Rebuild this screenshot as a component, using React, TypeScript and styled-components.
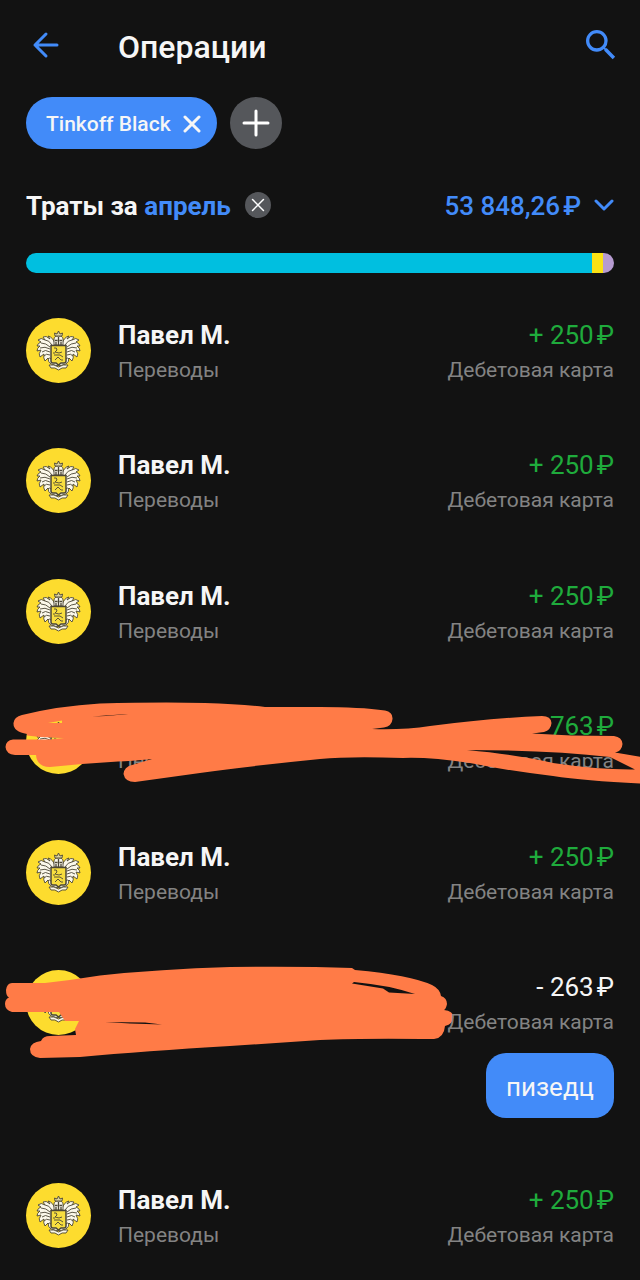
import React from "react";
import styled, { createGlobalStyle } from "styled-components";

const GlobalStyle = createGlobalStyle`
  *, *::before, *::after { box-sizing: border-box; }
  body { margin: 0; background: #121212; }
  button, h1, h2, ul, p { margin: 0; padding: 0; font: inherit; }
`;

const blue = "#428bf9";

const Screen = styled.div`
  min-height: 100vh;
  padding: 25px 26px 32px;
  overflow-x: hidden;
  background: #121212;
  color: #f6f6f6;
  font-family: Roboto, "Noto Sans", sans-serif;
`;

const Header = styled.header`
  display: flex;
  align-items: center;
  height: 40px;
`;

const IconButton = styled.button`
  display: flex;
  border: 0;
  background: none;
  color: ${blue};
  cursor: pointer;
`;

const SearchButton = styled(IconButton)`
  margin-right: -7px;
`;

const Title = styled.h1`
  flex: 1;
  padding: 4px 0 0 52px;
  font-size: 32px;
  line-height: 40px;
  font-weight: 500;
`;

const Filters = styled.div`
  display: flex;
  gap: 13px;
  margin-top: 32px;
`;

const Chip = styled.button`
  display: flex;
  align-items: center;
  gap: 12px;
  height: 52px;
  padding: 2px 16px 0 20px;
  border: 0;
  border-radius: 26px;
  background: ${blue};
  color: #f6f6f6;
  && { font-size: 21px; font-weight: 500; }
  cursor: pointer;
`;

const RoundButton = styled.button<{ $size: number }>`
  display: grid;
  place-items: center;
  width: ${(p) => p.$size}px;
  height: ${(p) => p.$size}px;
  border: 0;
  border-radius: 50%;
  background: #55575b;
  color: #fff;
  cursor: pointer;
`;

const Summary = styled.section`
  display: flex;
  align-items: center;
  justify-content: space-between;
  height: 32px;
  margin-top: 40px;
`;

const SummaryText = styled.span`
  padding-top: 2px;
`;

const Period = styled.h2`
  display: flex;
  align-items: center;
  gap: 14px;
  font-size: 26px;
  line-height: 32px;
  font-weight: 700;
`;

const MonthLink = styled.a`
  color: ${blue};
  text-decoration: none;
`;

const Total = styled.button`
  display: flex;
  align-items: center;
  gap: 13px;
  border: 0;
  background: none;
  color: ${blue};
  && { font-size: 26px; line-height: 32px; font-weight: 500; }
  cursor: pointer;
`;

const Bar = styled.div`
  display: flex;
  height: 20px;
  margin-top: 32px;
  border-radius: 10px;
  overflow: hidden;
`;

const Segment = styled.div<{ $share: number; $color: string }>`
  flex: ${(p) => p.$share} 0 0;
  background: ${(p) => p.$color};
`;

const List = styled.ul`
  margin-top: 45px;
  list-style: none;
`;

const Item = styled.li<{ $compact: boolean }>`
  padding-bottom: 65px;
  &:nth-child(even) { padding-bottom: ${(p) => (p.$compact ? 65 : 66)}px; }
  &:last-child { padding-bottom: 0; }
`;

const Row = styled.div`
  position: relative;
  display: flex;
  gap: 27px;
  height: 65px;
`;

const Avatar = styled.div`
  width: 65px;
  height: 65px;
  border-radius: 50%;
  background: #fddc2e;
`;

const Column = styled.div<{ $end?: boolean; $raised?: boolean }>`
  flex: ${(p) => (p.$end ? "none" : "1")};
  text-align: ${(p) => (p.$end ? "right" : "left")};
  ${(p) => p.$raised && "position: relative; z-index: 2;"}
`;

const Name = styled.p`
  font-size: 26px;
  line-height: 34px;
  font-weight: 700;
`;

const Amount = styled.p<{ $income: boolean }>`
  font-size: 26px;
  line-height: 34px;
  color: ${(p) => (p.$income ? "#1fab3c" : "#f6f6f6")};
`;

const Currency = styled.span`
  margin-left: 3px;
`;

const Caption = styled.p`
  font-size: 21px;
  line-height: 36px;
  color: #838383;
`;

const Bubble = styled.p`
  width: fit-content;
  height: 65px;
  margin: 18px 0 0 auto !important;
  padding: 2px 20px 0 !important;
  border-radius: 20px;
  background: ${blue};
  color: #f6f6f6;
  font-size: 26px;
  line-height: 65px;
`;

const Marker = styled.svg`
  position: absolute;
  z-index: 1;
  top: -14px;
  left: -26px;
  width: calc(100% + 52px);
  height: 110px;
  fill: #ff7b47;
  fill-rule: evenodd;
  pointer-events: none;
`;

const Cross = ({ size, width }: { size: number; width: number }) => (
  <svg width={size} height={size} viewBox="0 0 18 18" fill="none" stroke="currentColor" strokeWidth={width} strokeLinecap="round" aria-hidden="true">
    <path d="M2 2 16 16M16 2 2 16" />
  </svg>
);

const CrestHalf = () => (
  <g>
    <path
      d="M29 26Q27 19 22 18L24 21Q20 17 17 19L19 22Q15 19 12 22L15 24Q12 25 11 28L14 28Q11 30 11 33L15 32Q12 36 14 39L18 36Q17 40 19 43L22 40Q22 44 25 46L32 48Z"
      fill="#fbf8ea"
    />
    <path d="M26 27Q23 22 19 22M24 29Q20 25 15 25M24 31Q19 28 14 30M24 34Q19 31 16 34M24 37Q20 35 18 38M25 41Q23 39 22 41" />
  </g>
);

const Crest = () => (
  <svg width="65" height="65" viewBox="0 0 65 65" fill="none" stroke="#4b4635" strokeWidth=".9" aria-hidden="true">
    <CrestHalf />
    <g transform="matrix(-1 0 0 1 65 0)"><CrestHalf /></g>
    <path d="M23 47Q28 46 32.500 49Q37 46 42 47L40 50Q36 49 32.500 52Q29 49 25 50Z" fill="#fbf8ea" />
    <path d="M28 27V21Q28 18 32.500 18Q37 18 37 21V27Z" fill="#fbf8ea" />
    <path d="M29 18 28.500 15 31 16 32.500 13 34 16 36.500 15 36 18Z" fill="#ded4a0" />
    <path d="M32.500 19V27M29 22.500H31.500M33.500 22.500H36M30 24V27M35 24V27" strokeWidth="1.300" />
    <path d="M25 27.500H40V43Q40 45 38 45H35L32.500 47 30 45H27Q25 45 25 43Z" fill="#f7de3f" strokeWidth="1.500" />
    <path d="M28 30Q31 29 31 32L29 34 33 35 36 34M28 37H34L37 39M29 42 32 39 35 42 37 42M28 34V36" />
  </svg>
);

const SCRIBBLES = {
  wide: {
    viewBox: "0 695 640 110",
    d: "M13.5 723Q14 717 22 715Q58 706 100 703.500Q160 702 205 703Q240 704 265 707H320Q360 707 385 710.5Q393 712 392.5 719Q392 726 384 727.5L372 729Q404 730 430 726Q490 718 542 716Q551 716 551.5 723Q551 730 544 732L532 733.5Q570 736 614 736Q622 737 622.5 744Q622 751 615 752.5L641 757V783.500Q585 781 553 776Q510 771 470 763Q430 757 403 758Q350 756 320 759Q250 766 200 773L135 782Q125 782 123.500 774Q124 767 132 765L152 759Q130 761 118 761.500L82 764 50 767Q37 767 36 755H15Q6 754 5.500 747Q6 740 13 739.500H27V734Q13 732 13.500 723ZM48 723 62 720.500V723ZM27 735.500 40 737 64 738 50 739.500H27ZM92 716.500 106 715.500 128 714 106 716ZM467 750Q550 750 610 757L635 769.500Q600 770 553 763Q520 755 467 750Z",
  },
  block: {
    viewBox: "0 956 640 110",
    d: "M12 983H45Q72 980 100 975.500Q160 969 230 967Q300 966 352 968L355 970Q410 975 432 985Q440 989 441 996Q447 998 447 1004Q446 1009 444 1010Q453 1011 453.500 1017Q453 1024 445 1026Q444 1038 434 1039Q360 1038 320 1040L230 1046Q145 1051 80 1057L40 1058Q30 1057 30 1049Q31 1042 41 1041Q43 1036 50 1036L76 1035 75 1029 79 1021H65L59 1012H12Q5 1010 5 1004Q5 999 9 997.500Q6 996 6 990Q7 983 12 983ZM352 983.500 354 982Q388 985 415 994L389 992.500 383 988.500ZM105 1022 145 1022.500 162 1024.500 130 1023.500Z",
  },
};

type Operation = {
  amount: string;
  income: boolean;
  scribble?: keyof typeof SCRIBBLES;
  message?: string;
};

const received: Operation = { amount: "+ 250", income: true };

const OPERATIONS: Operation[] = [
  received,
  received,
  received,
  { amount: "+ 763", income: true, scribble: "wide" },
  received,
  { amount: "- 263", income: false, scribble: "block", message: "пизедц" },
  received,
];

const OperationItem = ({ amount, income, scribble, message }: Operation) => (
  <Item $compact={Boolean(message)}>
    <Row>
      <Avatar><Crest /></Avatar>
      <Column>
        {scribble !== "block" && (
          <>
            <Name>Павел М.</Name>
            <Caption>Переводы</Caption>
          </>
        )}
      </Column>
      <Column $end $raised={scribble === "block"}>
        <Amount $income={income}>{amount}<Currency>₽</Currency></Amount>
        <Caption>Дебетовая карта</Caption>
      </Column>
      {scribble && (
        <Marker viewBox={SCRIBBLES[scribble].viewBox} preserveAspectRatio="none" aria-hidden="true">
          <path d={SCRIBBLES[scribble].d} />
        </Marker>
      )}
    </Row>
    {message && <Bubble>{message}</Bubble>}
  </Item>
);

export default function App() {
  return (
    <Screen>
      <GlobalStyle />
      <Header>
        <IconButton aria-label="Назад">
          <svg width="40" height="40" viewBox="0 0 40 40" fill="none" stroke="currentColor" strokeWidth="3" strokeLinecap="round" strokeLinejoin="round">
            <path d="M31 20H9M20 9 9 20 20 31" />
          </svg>
        </IconButton>
        <Title>Операции</Title>
        <SearchButton aria-label="Поиск">
          <svg width="40" height="40" viewBox="0 0 24 24" fill="currentColor">
            <path d="M15.500 14h-.79l-.28-.27A6.470 6.470 0 0 0 16 9.500 6.500 6.500 0 1 0 9.500 16c1.610 0 3.090-.59 4.230-1.570l.27.28v.79l5 4.990L20.490 19l-4.990-5zm-6 0C7.010 14 5 11.990 5 9.500S7.010 5 9.500 5 14 7.010 14 9.500 11.990 14 9.500 14z" />
          </svg>
        </SearchButton>
      </Header>

      <Filters>
        <Chip>Tinkoff Black<Cross size={18} width={3} /></Chip>
        <RoundButton $size={52} aria-label="Добавить фильтр">
          <svg width="28" height="28" viewBox="0 0 28 28" stroke="currentColor" strokeWidth="3" strokeLinecap="round">
            <path d="M14 2V26M2 14H26" />
          </svg>
        </RoundButton>
      </Filters>

      <Summary>
        <Period>
          <SummaryText>Траты за <MonthLink href="#month">апрель</MonthLink></SummaryText>
          <RoundButton $size={26} aria-label="Сбросить период"><Cross size={14} width={2} /></RoundButton>
        </Period>
        <Total>
          <SummaryText>53 848,26<Currency>₽</Currency></SummaryText>
          <svg width="20" height="14" viewBox="0 0 20 14" fill="none" stroke="currentColor" strokeWidth="3" strokeLinecap="round" strokeLinejoin="round" aria-hidden="true">
            <path d="M2 3 10 11 18 3" />
          </svg>
        </Total>
      </Summary>

      <Bar>
        <Segment $share={566} $color="#00bfe0" />
        <Segment $share={11} $color="#fae114" />
        <Segment $share={11} $color="#b69bd0" />
      </Bar>

      <List>
        {OPERATIONS.map((operation, index) => (
          <OperationItem key={index} {...operation} />
        ))}
      </List>
    </Screen>
  );
}
